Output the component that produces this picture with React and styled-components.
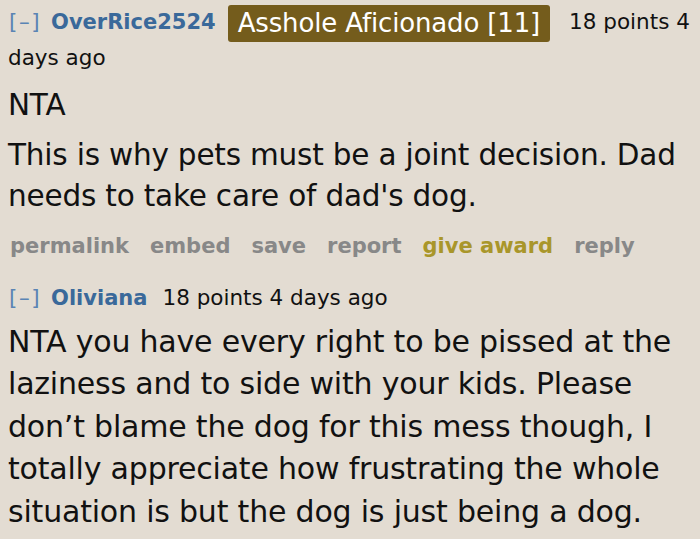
import React from "react";
import styled, { createGlobalStyle } from "styled-components";

const GlobalStyle = createGlobalStyle`
  html, body {
    margin: 0;
    padding: 0;
    background: #e3dcd2;
  }
  body {
    font-family: "DejaVu Sans", Verdana, sans-serif;
    color: #111;
  }
`;

const comments = [
  {
    author: "OverRice2524",
    flair: "Asshole Aficionado [11]",
    points: "18 points",
    time: "4 days ago",
    size: 29.5,
    lead: 41,
    paragraphs: [
      "NTA",
      "This is why pets must be a joint decision. Dad needs to take care of dad's dog.",
    ],
    actions: true,
  },
  {
    author: "Oliviana",
    points: "18 points",
    time: "4 days ago",
    size: 30,
    lead: 42.5,
    paragraphs: [
      "NTA you have every right to be pissed at the laziness and to side with your kids. Please don\u2019t blame the dog for this mess though, I totally appreciate how frustrating the whole situation is but the dog is just being a dog.",
    ],
  },
];

function Comment({ data }) {
  return (
    <Entry>
      <Tagline $flair={!!data.flair}>
        <Expand>[–]</Expand>
        <Author $wide={!data.flair}>{data.author}</Author>
        {data.flair && <Flair>{data.flair}</Flair>}
        <span>{data.points}</span> {data.time}
      </Tagline>
      <Body>
        {data.paragraphs.map((p, i) => (
          <Para key={i} $size={data.size} $lead={data.lead}>
            {p}
          </Para>
        ))}
      </Body>
      {data.actions && (
        <Buttons>
          <Action>permalink</Action>
          <Action>embed</Action>
          <Action>save</Action>
          <Action>report</Action>
          <Action $gold>give award</Action>
          <Action>reply</Action>
        </Buttons>
      )}
    </Entry>
  );
}

export default function App() {
  return (
    <>
      <GlobalStyle />
      <Page>
        {comments.map((c) => (
          <Comment key={c.author} data={c} />
        ))}
      </Page>
    </>
  );
}

const Page = styled.div`
  width: 700px;
  height: 539px;
  overflow: hidden;
  padding: 0 8px;
  box-sizing: border-box;
`;

const Entry = styled.div`
  & + & {
    margin-top: 16.5px;
  }
`;

const Tagline = styled.div`
  font-size: 21.5px;
  line-height: 32px;
  padding-top: 5px;
  padding-bottom: ${(p) => (p.$flair ? "4px" : "0")};
  color: #111;
`;

const Expand = styled.span`
  color: #5a84b4;
  letter-spacing: 1.5px;
  margin-left: 1px;
  margin-right: 10px;
`;

const Author = styled.span`
  color: #3a699a;
  font-weight: bold;
  font-size: 21px;
  margin-right: ${(p) => (p.$wide ? "15px" : "12px")};
`;

const Flair = styled.span`
  display: inline-block;
  background: #745c1c;
  color: #fff;
  font-size: 26px;
  letter-spacing: -0.15px;
  line-height: 37px;
  padding: 0 10px;
  border-radius: 3px;
  margin-right: 19px;
  vertical-align: -3px;
`;

const Body = styled.div`
  margin-top: 6.5px;
`;

const Para = styled.p`
  margin: 0 0 9px;
  font-size: ${(p) => p.$size}px;
  line-height: ${(p) => p.$lead}px;
  letter-spacing: -0.2px;
`;

const Buttons = styled.div`
  display: flex;
  gap: 21px;
  padding: 0 2px;
  margin-top: 14px;
  font-size: 21px;
  line-height: 30px;
  font-weight: bold;
`;

const Action = styled.span`
  color: ${(p) => (p.$gold ? "#a9962a" : "#888")};
`;
